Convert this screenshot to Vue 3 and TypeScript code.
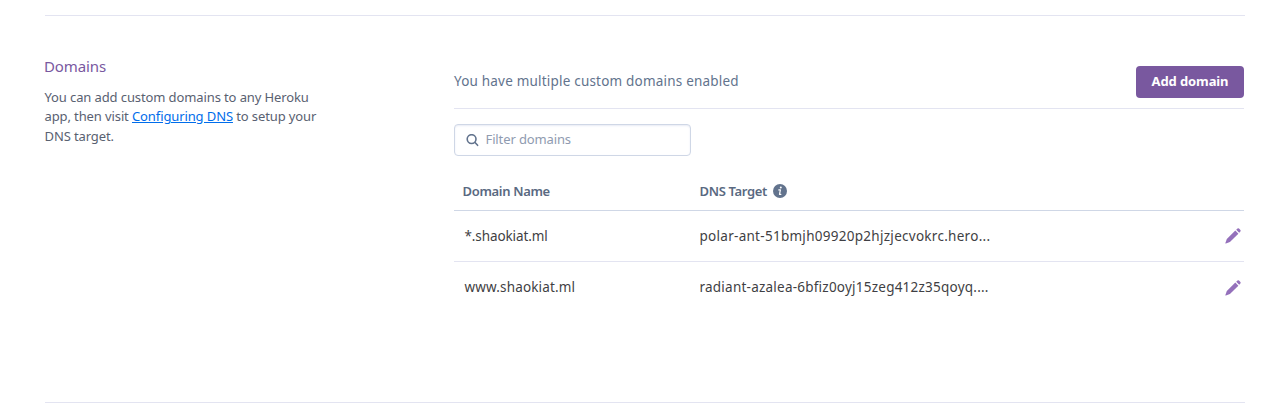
<script setup lang="ts">
interface DomainRow {
  name: string
  target: string
  kind: string
}

const rows: DomainRow[] = [
  { name: '*.shaokiat.ml', target: 'polar-ant-51bmjh09920p2hjzjecvokrc.hero...', kind: 'wildcard' },
  { name: 'www.shaokiat.ml', target: 'radiant-azalea-6bfiz0oyj15zeg412z35qoyq....', kind: 'www' },
]
</script>

<template>
  <main class="page">
    <section class="section">
      <aside class="intro">
        <h2>Domains</h2>
        <p>
          You can add custom domains to any Heroku<br />
          app, then visit <a href="#">Configuring DNS</a> to setup your<br />
          DNS target.
        </p>
      </aside>

      <div class="content">
        <header class="bar">
          <span class="status">You have multiple custom domains enabled</span>
          <button class="add" type="button">Add domain</button>
        </header>

        <label class="filter">
          <svg width="14" height="14" viewBox="0 0 14 14" fill="none" stroke="#62738d" stroke-width="1.6" stroke-linecap="round">
            <circle cx="5.6" cy="5.1" r="4.4" />
            <path d="M9 8.5 11.6 11.3" />
          </svg>
          <span>Filter domains</span>
        </label>

        <div class="row head">
          <div class="name"><span>Domain Name</span></div>
          <div class="target">
            <span>DNS Target</span>
            <svg width="14" height="14" viewBox="0 0 14 14">
              <circle cx="7" cy="7" r="7" fill="#62738d" />
              <circle cx="7.8" cy="3.6" r="1" fill="#fff" />
              <path d="M5.8 5.9H7.4L6.5 10.3H7.9" fill="none" stroke="#fff" stroke-width="1.2" stroke-linejoin="round" stroke-linecap="round" />
            </svg>
          </div>
        </div>
        <div v-for="row in rows" :key="row.name" class="row item" :class="row.kind">
          <div class="name"><span>{{ row.name }}</span></div>
          <div class="target"><span>{{ row.target }}</span></div>
          <svg class="edit" width="16" height="16" viewBox="0 0 16 16" fill="#9470bb">
            <path d="M10.3 2.6 13.4 5.7 4.9 14.1 .9 15.6Q.3 15.7.4 15.1L1.8 11.1Z" />
            <path d="M11.2 1.8 12.5.6Q13.3 0 14 .6L15.4 2Q16 2.7 15.4 3.4L14.2 4.8Z" />
          </svg>
        </div>
      </div>
    </section>
  </main>
</template>

<style>
body {
  margin: 0;
  background: #fff;
}
</style>

<style scoped>
.page {
  box-sizing: border-box;
  height: 415px;
  padding: 15px 37px 0 45px;
  overflow: hidden;
  font-family: "Noto Sans", "Open Sans", sans-serif;
  font-size: 13px;
  color: #3f3f44;
}
.section {
  box-sizing: border-box;
  display: flex;
  height: 388px;
  border-top: 1px solid #e3e4f1;
  border-bottom: 1px solid #e3e4f1;
}
.intro {
  width: 409px;
  flex: none;
  white-space: nowrap;
}
h2 {
  margin: 38px 0 0 -1px;
  font-size: 15px;
  font-weight: 400;
  line-height: 24px;
  letter-spacing: -0.1px;
  color: #79589f;
}
p {
  margin: 9.6px 0 0 -0.5px;
  line-height: 19.5px;
  letter-spacing: -0.11px;
  color: #596171;
}
a {
  color: #006deb;
}
.content {
  width: 790px;
}
.bar {
  display: flex;
  box-sizing: border-box;
  height: 93px;
  padding-top: 50px;
  justify-content: space-between;
  border-bottom: 1px solid #e3e4f1;
}
.status {
  font-size: 13.5px;
  line-height: 31px;
  letter-spacing: 0.2px;
  color: #62738d;
}
.add {
  width: 108px;
  height: 32px;
  padding: 0 0 2px;
  border: 0;
  border-radius: 4px;
  background: #79589f;
  color: #fff;
  font: 700 13px/30px "Noto Sans", sans-serif;
  letter-spacing: -0.1px;
}
.filter {
  display: flex;
  align-items: center;
  box-sizing: border-box;
  width: 237px;
  height: 32px;
  margin-top: 15px;
  padding: 0 0 2px 11px;
  gap: 5.5px;
  border: 1px solid #cfd7e6;
  border-radius: 4px;
  box-shadow: inset 0 1px 2px #e8ebf5;
  letter-spacing: -0.12px;
  color: #8f9bb0;
}
.filter svg {
  margin-top: 3px;
}
.row {
  box-sizing: border-box;
  display: flex;
  align-items: center;
  white-space: nowrap;
}
.head {
  height: 55px;
  padding-top: 15px;
  border-bottom: 1px solid #cfd7e6;
  color: #596981;
  font-weight: 600;
  letter-spacing: -0.33px;
}
.item {
  height: 51px;
  font-size: 13.5px;
}
.item.wildcard {
  border-bottom: 1px solid #e3e4f1;
}
.item .name,
.item .target {
  padding-bottom: 1px;
}
.name {
  box-sizing: border-box;
  width: 245.5px;
  padding-left: 10.5px;
}
.head .name {
  padding-left: 8.5px;
}
.wildcard .name {
  letter-spacing: -0.1px;
}
.www .name {
  letter-spacing: 0.16px;
}
.wildcard .target {
  letter-spacing: 0.28px;
}
.www .target {
  letter-spacing: 0.23px;
}
.target {
  display: flex;
  align-items: center;
  gap: 6px;
}
.edit {
  margin-left: auto;
  margin-right: 3px;
}
</style>
